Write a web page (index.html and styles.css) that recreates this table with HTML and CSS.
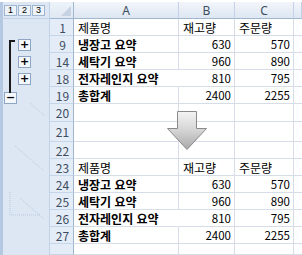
FILE: index.html
```
<!DOCTYPE html>
<html lang="ko">
<head>
<meta charset="utf-8">
<link rel="stylesheet" href="styles.css">
</head>
<body>
<div class="sheet">
  <div class="pane levels"><span class="lvl">1</span><span class="lvl">2</span><span class="lvl">3</span></div>
  <div class="corner"><span class="tri"></span></div>
  <div class="ch">A</div><div class="ch">B</div><div class="ch">C</div><div class="ch last"></div>

  <div class="pane"></div><div class="rh">1</div><div class="c">제품명</div><div class="c">재고량</div><div class="c">주문량</div><div class="c last"></div>
  <div class="pane btnrow"><span class="bracket"></span><span class="ob">+</span></div><div class="rh">9</div><div class="c b">냉장고 요약</div><div class="c n">630</div><div class="c n">570</div><div class="c last"></div>
  <div class="pane btnrow"><span class="ob">+</span></div><div class="rh">14</div><div class="c b">세탁기 요약</div><div class="c n">960</div><div class="c n">890</div><div class="c last"></div>
  <div class="pane btnrow"><span class="ob">+</span></div><div class="rh">18</div><div class="c b over">전자레인지 요약</div><div class="c n">810</div><div class="c n">795</div><div class="c last"></div>
  <div class="pane minusrow"><span class="ob minus">−</span></div><div class="rh">19</div><div class="c b">총합계</div><div class="c n">2400</div><div class="c n">2255</div><div class="c last"></div>
  <div class="pane"></div><div class="rh">20</div><div class="c"></div><div class="c"></div><div class="c"></div><div class="c last"></div>
  <div class="pane"></div><div class="rh">21</div><div class="c"></div><div class="c"></div><div class="c"></div><div class="c last"></div>
  <div class="pane"></div><div class="rh">22</div><div class="c"></div><div class="c"></div><div class="c"></div><div class="c last"></div>
  <div class="pane"></div><div class="rh">23</div><div class="c">제품명</div><div class="c">재고량</div><div class="c">주문량</div><div class="c last"></div>
  <div class="pane"></div><div class="rh">24</div><div class="c b">냉장고 요약</div><div class="c n">630</div><div class="c n">570</div><div class="c last"></div>
  <div class="pane"></div><div class="rh">25</div><div class="c b">세탁기 요약</div><div class="c n">960</div><div class="c n">890</div><div class="c last"></div>
  <div class="pane"></div><div class="rh">26</div><div class="c b over">전자레인지 요약</div><div class="c n">810</div><div class="c n">795</div><div class="c last"></div>
  <div class="pane"></div><div class="rh">27</div><div class="c b">총합계</div><div class="c n">2400</div><div class="c n">2255</div><div class="c last"></div>
  <div class="pane"></div><div class="rh"></div><div class="c"></div><div class="c"></div><div class="c"></div><div class="c last"></div>

  <svg class="faint" width="50" height="255" viewBox="0 0 50 255">
    <g stroke="#b9c9de" stroke-width="1" stroke-dasharray="1 1" fill="none">
      <path d="M30 103 L45 116"/>
      <path d="M15 146 L44 171"/>
      <path d="M10 192 V215 H40"/>
      <path d="M20 198 L44 219"/>
    </g>
  </svg>

  <svg class="arrow" width="42" height="40" viewBox="0 0 42 40">
    <defs>
      <linearGradient id="ag" x1="0" y1="0" x2="0" y2="1">
        <stop offset="0" stop-color="#f4f4f4"/>
        <stop offset="0.5" stop-color="#d4d4d4"/>
        <stop offset="1" stop-color="#a8a8a8"/>
      </linearGradient>
    </defs>
    <path d="M11.5 0.5 H30.5 V17.5 H40.5 L21 38.5 L1.5 17.5 H11.5 Z" fill="url(#ag)" stroke="#8a8a8a" stroke-width="1"/>
  </svg>
</div>
</body>
</html>
```
FILE: styles.css
```
* { box-sizing: border-box; }
html, body { margin: 0; padding: 0; background: #ffffff; }
body {
  width: 302px;
  height: 255px;
  overflow: hidden;
  font-family: "Noto Sans CJK KR", "Noto Sans", sans-serif;
  font-size: 12px;
  color: #000;
}
.sheet {
  position: relative;
  display: grid;
  grid-template-columns: 50px 24px 105px 56px 59px 1fr;
  grid-template-rows: 17px repeat(5, 17px) 18px 20px repeat(6, 17px) 1fr;
  height: 253px;
  margin-top: 2px;
}
.pane {
  background: #dde7f4;
  border-left: 3px solid #b4c8e1;
  border-right: 1px solid #c2d3e8;
  position: relative;
}
.levels {
  display: flex;
  align-items: center;
  gap: 1px;
  padding-left: 1px;
  border-bottom: 1px solid #c2d3e8;
}
.lvl {
  width: 13px;
  height: 11px;
  border: 1px solid #9fb5d0;
  background: #eef3fa;
  font-family: "Liberation Sans", sans-serif;
  font-size: 9px;
  line-height: 9px;
  text-align: center;
  color: #000;
}
.btnrow {
  display: flex;
  align-items: center;
  padding-left: 15px;
}
.minusrow {
  display: flex;
  align-items: flex-end;
  padding-left: 1px;
}
.ob {
  width: 13px;
  height: 12px;
  border: 1px solid #8ea6c4;
  background: #f3f6fb;
  font-family: "DejaVu Sans", sans-serif;
  font-weight: bold;
  font-size: 11px;
  line-height: 10px;
  text-align: center;
  color: #000;
}
.bracket {
  position: absolute;
  left: 6px;
  top: 4px;
  width: 6px;
  height: 53px;
  border-left: 2px solid #1a1a1a;
  border-top: 2px solid #1a1a1a;
  z-index: 2;
}
.corner {
  background: linear-gradient(#eef3fa, #dfe7f2);
  border-right: 1px solid #9eb6ce;
  border-bottom: 1px solid #9eb6ce;
  position: relative;
}
.tri {
  position: absolute;
  right: 2px;
  bottom: 2px;
  width: 0;
  height: 0;
  border-left: 10px solid transparent;
  border-bottom: 10px solid #c6d2e2;
}
.ch {
  background: linear-gradient(#f3f6fb, #dde6f2);
  border-right: 1px solid #c3d2e6;
  border-bottom: 1px solid #9eb6ce;
  color: #3e4d60;
  font-family: "Noto Sans", sans-serif;
  font-size: 12px;
  display: flex;
  align-items: center;
  justify-content: center;
}
.rh {
  background: #e4ecf7;
  border-right: 1px solid #9eb6ce;
  border-bottom: 1px solid #c5d5ea;
  color: #3e4d60;
  font-size: 12px;
  display: flex;
  align-items: center;
  justify-content: center;
  padding-left: 2px;
}
.c {
  border-right: 1px solid #d6dde8;
  border-bottom: 1px solid #d6dde8;
  display: flex;
  align-items: flex-end;
  padding: 0 3px 0 4px;
  white-space: nowrap;
  line-height: 15px;
}
.c.b { font-weight: bold; }
.c.n { justify-content: flex-end; font-size: 11.5px; }
.c.over { overflow: visible; border-right-color: transparent; }
.c.last { border-right: none; }
.faint {
  position: absolute;
  left: 0;
  top: -2px;
  pointer-events: none;
}
.arrow {
  position: absolute;
  left: 166px;
  top: 109px;
  z-index: 3;
}
```
